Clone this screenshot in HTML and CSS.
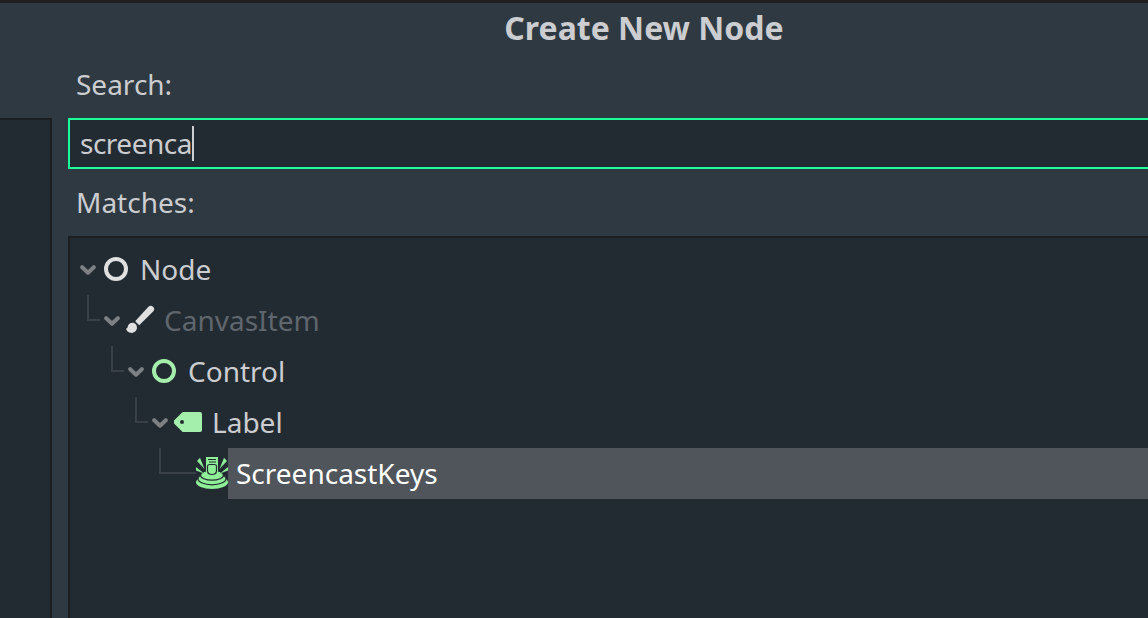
FILE: index.html
```html
<!DOCTYPE html>
<html lang="en">
<head>
<meta charset="utf-8">
<title>Create New Node</title>
<link rel="stylesheet" href="styles.css">
</head>
<body>
<div class="dialog">
  <h1 class="title">Create New Node</h1>
  <div class="columns">
    <aside class="side-panel"></aside>
    <main class="main">
      <div class="label">Search:</div>
      <div class="search"><span class="query">screenca</span><i class="caret"></i></div>
      <div class="label matches">Matches:</div>
      <div class="tree">
        <div class="row">
          <span class="guide none"></span>
          <svg class="chevron" viewBox="0 0 16 12"><path d="M2.200 3.200 8 8.700l5.800-5.500"/></svg>
          <svg class="icon" viewBox="0 0 32 32"><circle cx="16" cy="16" r="10" fill="none" stroke="#e0e0e0" stroke-width="4"/></svg>
          <span class="name">Node</span>
        </div>
        <div class="row d1">
          <span class="guide"></span>
          <svg class="chevron" viewBox="0 0 16 12"><path d="M2.200 3.200 8 8.700l5.800-5.500"/></svg>
          <svg class="icon" viewBox="0 0 32 32" fill="#e0e0e0"><path d="M11.200 17.300 24.400 2.800a3.300 3.300 0 0 1 4.700 4.700L15.200 21.200z"/><path d="M2 24.600c1.600.2 1.400-1.200 2-2.800 1.200-3.400 6-4 8-1.200 2.200 3.200.6 8-4.200 8.400C5 29.200 2.400 27.400 2 24.600z"/></svg>
          <span class="name dim">CanvasItem</span>
        </div>
        <div class="row d2">
          <span class="guide"></span>
          <svg class="chevron" viewBox="0 0 16 12"><path d="M2.200 3.200 8 8.700l5.800-5.500"/></svg>
          <svg class="icon" viewBox="0 0 32 32"><circle cx="16" cy="16" r="10" fill="none" stroke="#a5efac" stroke-width="4"/></svg>
          <span class="name">Control</span>
        </div>
        <div class="row d3">
          <span class="guide"></span>
          <svg class="chevron" viewBox="0 0 16 12"><path d="M2.200 3.200 8 8.700l5.800-5.500"/></svg>
          <svg class="icon" viewBox="0 0 32 32" fill="#a5efac"><path fill-rule="evenodd" d="M11.500 6H28a2 2 0 0 1 2 2v16a2 2 0 0 1-2 2H11.500a2 2 0 0 1-1.400-.6L2 17.500v-3l8.100-7.900a2 2 0 0 1 1.400-.6zM10 14a2 2 0 1 0 0 4 2 2 0 0 0 0-4z"/></svg>
          <span class="name">Label</span>
        </div>
        <div class="row d4">
          <span class="guide leaf"></span>
          <svg class="icon" viewBox="0 0 32 32" fill="#8eef97">
            <ellipse cx="16" cy="25.200" rx="16" ry="6.800"/>
            <ellipse cx="16" cy="21.800" rx="14" ry="6" stroke="#232b32" stroke-width="1.200"/>
            <ellipse cx="16" cy="18.200" rx="11.500" ry="5" stroke="#232b32" stroke-width="1.200"/>
            <path d="M10 0h12v17H10z"/>
            <path d="M12 2.500h8M13 5h7" stroke="#232b32" stroke-width="1.200"/>
            <path d="M11.500 13.500V9.500c0-1.200.8-2 2-2h5c1.200 0 2 .8 2 2v4c0 2.600-2 4-4.500 4s-4.500-1.400-4.500-4z" stroke="#232b32" stroke-width="1.200"/>
            <path d="M4 .8 1 4l7.500 8zM28 .8 31 4l-7.500 8zM0 10v3.500l8 3zM32 10v3.500l-8 3z"/>
          </svg>
          <span class="name selected">ScreencastKeys</span>
        </div>
      </div>
    </main>
  </div>
</div>
</body>
</html>
```
FILE: styles.css
```css
* { box-sizing: border-box; }
body {
  margin: 0;
  height: 618px;
  overflow: hidden;
  background: #2f3941;
  color: #cbcdd0;
  font: 28px/38px "Noto Sans", sans-serif;
}
.dialog {
  height: 618px;
  border-top: 3px solid #202020;
  display: flex;
  flex-direction: column;
}
.title {
  margin: 0;
  padding-left: 140px;
  height: 60px;
  line-height: 50px;
  font-size: 32px;
  text-align: center;
}
.columns {
  flex: 1;
  display: flex;
  gap: 16px;
}
.side-panel {
  width: 52px;
  margin-top: 55px;
  background: #232b32;
  border: solid #1a1f24;
  border-width: 2px 2px 0 0;
}
.main {
  flex: 1;
  display: flex;
  flex-direction: column;
}
.label {
  height: 55px;
  padding: 2px 8px 0;
}
.search {
  height: 51px;
  display: flex;
  align-items: center;
  padding-left: 10px;
  background: #232b32;
  border: solid #1dff9b;
  border-width: 2px 0 2px 2px;
}
.query {
  padding-bottom: 2px;
  letter-spacing: -0.5px;
}
.caret {
  width: 2px;
  height: 35px;
  background: #cdcfd2;
}
.matches {
  height: 67px;
  padding-top: 14px;
}
.tree {
  flex: 1;
  padding-top: 6px;
  background: #232b32;
  border: solid #1a1f24;
  border-width: 2px 0 0 2px;
}
.row {
  height: 51px;
  display: flex;
  align-items: center;
}
.d1 { padding-left: 17px; }
.d2 { padding-left: 41px; }
.d3 { padding-left: 65px; }
.d4 { padding-left: 89px; }
.guide {
  width: 13px;
  height: 26px;
  margin-right: 4px;
  align-self: flex-start;
  border: solid #394047;
  border-width: 0 0 2px 2px;
}
.guide.none {
  width: 10px;
  margin: 0;
  border: 0;
}
.guide.leaf {
  width: 37px;
  margin: 0;
}
.chevron {
  width: 16px;
  height: 12px;
  margin-right: 4px;
  fill: none;
  stroke: #7c8185;
  stroke-width: 4;
  stroke-linecap: round;
  stroke-linejoin: round;
}
.icon {
  width: 32px;
  height: 32px;
  margin-bottom: 1px;
}
.name {
  flex: 1;
  height: 51px;
  line-height: 51px;
  padding-left: 8px;
}
.dim { color: #5f666d; }
.selected {
  background: #50545b;
  color: #fff;
}
```
